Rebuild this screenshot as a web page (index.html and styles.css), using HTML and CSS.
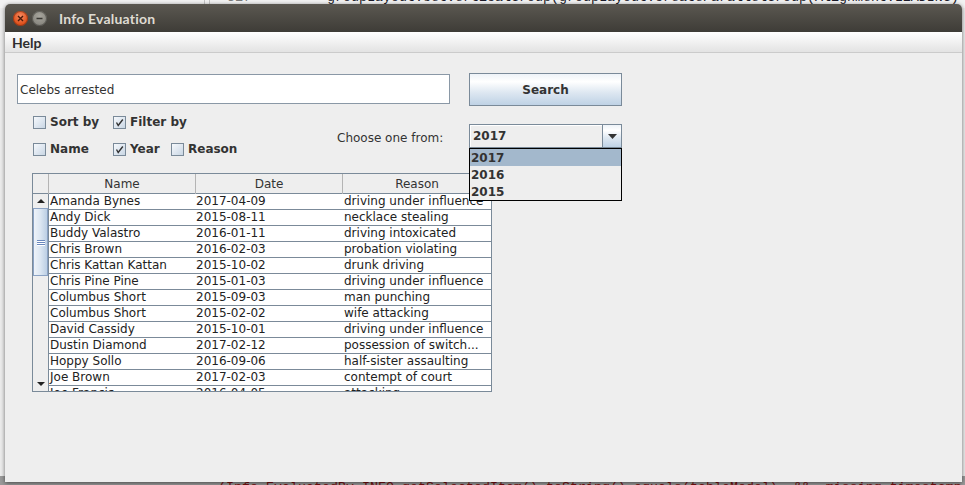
FILE: index.html
```html
<!DOCTYPE html>
<html>
<head>
<meta charset="utf-8">
<title>Info Evaluation</title>
<link rel="stylesheet" href="styles.css">
</head>
<body>
<div class="desk-top">
  <span class="gutter g1"></span><span class="gutter g2"></span>
  <span class="lineno">317</span>
  <span class="code">groupLayout.setVerticalGroup(groupLayout.createParallelGroup(Alignment.LEADING)</span>
</div>
<div class="desk-bottom">
  <span class="redcode">(Info EvaluatedBy INFO.getSelectedItem().toString().equals(tableModel)  &amp;&amp;  missing_timestamp  YES</span>
</div>

<div class="window">
  <div class="titlebar">
    <span class="wbtn close"><svg width="7" height="7" viewBox="0 0 7 7"><path d="M1 1 L6 6 M6 1 L1 6" stroke="#4a1a0a" stroke-width="1.4"/></svg></span>
    <span class="wbtn mini"><svg width="7" height="7" viewBox="0 0 7 7"><path d="M0.5 3.5 L6.5 3.5" stroke="#3a3935" stroke-width="1.4"/></svg></span>
    <span class="title">Info Evaluation</span>
  </div>
  <div class="menubar"><span class="menu">Help</span></div>

  <div class="panel">
    <div class="row1">
      <div class="field">Celebs arrested</div>
      <div class="button">Search</div>
    </div>
    <div class="row2">
      <div class="checks">
        <div class="chk"><span class="cb"></span>Sort by</div>
        <div class="chk span2"><span class="cb"><svg width="11" height="11" viewBox="0 0 11 11"><path d="M2.5 5.5 L4.2 8.5 L8.8 2.5" fill="none" stroke="#333" stroke-width="1.4"/></svg></span>Filter by</div>
        <div class="chk"><span class="cb"></span>Name</div>
        <div class="chk"><span class="cb"><svg width="11" height="11" viewBox="0 0 11 11"><path d="M2.5 5.5 L4.2 8.5 L8.8 2.5" fill="none" stroke="#333" stroke-width="1.4"/></svg></span>Year</div>
        <div class="chk"><span class="cb"></span>Reason</div>
      </div>
      <div class="choose">Choose one from:</div>
      <div class="combo">
        <div class="combo-text">2017</div>
        <div class="combo-arrow"><svg width="9" height="5" viewBox="0 0 9 5"><path d="M0 0 L9 0 L4.5 5 Z" fill="#333"/></svg></div>
      </div>
    </div>

    <div class="pane">
      <div class="thead">
        <div class="corner"></div>
        <div class="th">Name</div>
        <div class="th">Date</div>
        <div class="th last">Reason</div>
      </div>
      <div class="tbody-wrap">
        <div class="vscroll">
          <div class="sarrow up"><svg width="8" height="4" viewBox="0 0 8 4"><path d="M0 4 L8 4 L4 0 Z" fill="#222"/></svg></div>
          <div class="thumb"><span class="grip"></span><span class="grip"></span><span class="grip"></span></div>
          <div class="track"></div>
          <div class="sarrow down"><svg width="8" height="4" viewBox="0 0 8 4"><path d="M0 0 L8 0 L4 4 Z" fill="#222"/></svg></div>
        </div>
        <div class="tbody">
          <div class="tr"><span>Amanda Bynes</span><span>2017-04-09</span><span>driving under influence</span></div>
          <div class="tr"><span>Andy Dick</span><span>2015-08-11</span><span>necklace stealing</span></div>
          <div class="tr"><span>Buddy Valastro</span><span>2016-01-11</span><span>driving intoxicated</span></div>
          <div class="tr"><span>Chris Brown</span><span>2016-02-03</span><span>probation violating</span></div>
          <div class="tr"><span>Chris Kattan Kattan</span><span>2015-10-02</span><span>drunk driving</span></div>
          <div class="tr"><span>Chris Pine Pine</span><span>2015-01-03</span><span>driving under influence</span></div>
          <div class="tr"><span>Columbus Short</span><span>2015-09-03</span><span>man punching</span></div>
          <div class="tr"><span>Columbus Short</span><span>2015-02-02</span><span>wife attacking</span></div>
          <div class="tr"><span>David Cassidy</span><span>2015-10-01</span><span>driving under influence</span></div>
          <div class="tr"><span>Dustin Diamond</span><span>2017-02-12</span><span>possession of switch...</span></div>
          <div class="tr"><span>Hoppy Sollo</span><span>2016-09-06</span><span>half-sister assaulting</span></div>
          <div class="tr"><span>Joe Brown</span><span>2017-02-03</span><span>contempt of court</span></div>
          <div class="tr"><span>Joe Francis</span><span>2016-04-05</span><span>attacking</span></div>
        </div>
      </div>
    </div>

    <div class="popup">
      <div class="item sel">2017</div>
      <div class="item">2016</div>
      <div class="item">2015</div>
    </div>
  </div>
</div>
</body>
</html>
```

FILE: styles.css
```css
* { box-sizing: border-box; }
html, body { margin: 0; padding: 0; }
body {
  width: 965px;
  height: 485px;
  overflow: hidden;
  position: relative;
  background: #ececec;
  font-family: "DejaVu Sans", sans-serif;
  font-size: 12px;
  color: #333;
}

/* desktop behind the window */
.desk-top {
  position: absolute; left: 0; top: 0;
  width: 965px; height: 8px;
  overflow: hidden;
  background: #f2f2f2;
}
.gutter { position: absolute; top: 0; width: 1px; height: 8px; background: #c4c4c4; }
.g1 { left: 204px; }
.g2 { left: 209px; }
.lineno {
  position: absolute; left: 227px; top: -9px;
  font-family: "Liberation Mono", monospace; font-size: 13.33px; line-height: 14px;
  color: #7a7a7a; white-space: pre;
}
.code {
  position: absolute; left: 327px; top: -9px;
  font-family: "Liberation Mono", monospace; font-size: 13.33px; line-height: 14px;
  color: #1c1c2a; white-space: pre;
}
.desk-bottom {
  position: absolute; left: 0; top: 476px;
  width: 965px; height: 9px;
  background: #9a9a9a;
  overflow: hidden;
}
.redcode {
  position: absolute; left: 218px; top: 5px;
  font-family: "Liberation Mono", monospace; font-size: 13.33px; line-height: 14px;
  color: #7a1010; white-space: pre;
}

/* window */
.window {
  position: absolute; left: 5px; top: 4px;
  width: 957px; height: 478px;
  background: #eeeeee;
  border-radius: 5px 5px 0 0;
  box-shadow: 0 1px 4px rgba(0,0,0,0.55);
  overflow: hidden;
  display: flex; flex-direction: column;
}
.titlebar {
  flex: none;
  height: 28px;
  display: flex; align-items: center;
  padding-left: 8px;
  background: linear-gradient(#5b5851, #3e3c37);
}
.wbtn {
  width: 15px; height: 15px; border-radius: 50%;
  display: flex; align-items: center; justify-content: center;
}
.close {
  background: radial-gradient(circle at 50% 35%, #f78c64 0%, #e0541f 60%, #c2431a 100%);
  box-shadow: inset 0 0 0 1px rgba(90,30,10,0.45);
}
.mini {
  margin-left: 4px;
  background: radial-gradient(circle at 50% 35%, #a8a69e 0%, #8a8881 65%, #75736d 100%);
  box-shadow: inset 0 0 0 1px rgba(40,40,36,0.45);
}
.title {
  margin-left: 12px;
  font-family: Lato, "DejaVu Sans", sans-serif;
  font-weight: 700; font-size: 14px;
  color: #dfdbd2;
  letter-spacing: 0.2px;
}
.menubar {
  flex: none;
  height: 21px;
  display: flex; align-items: center;
  padding-left: 7px;
  background: linear-gradient(#ffffff, #e3e3e3);
  border-bottom: 1px solid #cbcbcb;
}
.menu {
  font-family: Lato, "DejaVu Sans", sans-serif;
  font-weight: 700; font-size: 14px;
  color: #2e2e2e;
}

/* content panel */
.panel {
  flex: 1;
  position: relative;
  background: #eeeeee;
}
.row1 {
  display: flex; align-items: flex-start;
  margin: 20px 0 0 12px;
}
.field {
  width: 433px; height: 30px;
  margin-top: 1px;
  border: 1px solid #8a98a6;
  background: #fff;
  padding: 1px 0 0 2px;
  line-height: 28px;
  color: #333;
}
.button {
  width: 153px; height: 33px;
  margin-left: 19px;
  border: 1px solid #7a8a99;
  background: linear-gradient(#eef3f8 0%, #ffffff 25%, #dde7f1 60%, #bfd2e5 100%);
  font-weight: 700;
  display: flex; align-items: center; justify-content: center;
  color: #333;
}

.row2 {
  display: flex; align-items: flex-start;
  margin: 6px 0 0 28px;
}
.checks {
  width: 304px;
  display: grid;
  grid-template-columns: 80px 58px 1fr;
  grid-auto-rows: 20px;
  row-gap: 7px;
}
.chk {
  display: flex; align-items: center;
  font-weight: 700;
  white-space: nowrap;
  color: #333;
}
.span2 { grid-column: span 2; }
.cb {
  width: 13px; height: 13px;
  margin-right: 4px;
  border: 1px solid #7a8a99;
  background: linear-gradient(135deg, #f6f9fc 0%, #dbe4ee 60%, #c9d6e3 100%);
  display: flex; align-items: center; justify-content: center;
}
.choose {
  width: 132px;
  margin-top: 18px;
  line-height: 16px;
  color: #333;
}
.combo {
  width: 153px; height: 24px;
  margin-top: 12px;
  border: 1px solid #7a8a99;
  display: flex;
}
.combo-text {
  flex: 1;
  background: #eeeeee;
  box-shadow: inset 1px 1px 0 #ffffff;
  padding-left: 3px;
  font-weight: 700;
  line-height: 22px;
  color: #333;
}
.combo-arrow {
  width: 19px;
  border-left: 1px solid #7a8a99;
  background: linear-gradient(#eef3f8 0%, #ffffff 25%, #dde7f1 60%, #bfd2e5 100%);
  display: flex; align-items: center; justify-content: center;
}

/* table */
.pane {
  width: 460px; height: 219px;
  margin: 14px 0 0 27px;
  border: 1px solid #7a8a99;
  display: flex; flex-direction: column;
  overflow: hidden;
  background: #eeeeee;
}
.thead {
  flex: none;
  height: 20px;
  display: grid;
  grid-template-columns: 16px 147px 147px 1fr;
  border-bottom: 1px solid #7a8a99;
  background: #eeeeee;
}
.corner { border-right: 1px solid #b4b4b4; }
.th {
  border-right: 1px solid #b4b4b4;
  text-align: center;
  line-height: 19px;
  padding-top: 1px;
  color: #333;
}
.th.last { border-right: none; }
.tbody-wrap {
  flex: 1;
  display: flex;
  overflow: hidden;
}
.vscroll {
  width: 15px; flex: none;
  display: flex; flex-direction: column;
  background: #eeeeee;
}
.sarrow {
  flex: none;
  display: flex; align-items: center; justify-content: center;
}
.sarrow.up { height: 14px; }
.sarrow.down { height: 15px; }
.thumb {
  flex: none;
  height: 68px;
  border: 1px solid #8aa2c4;
  background: linear-gradient(90deg, #eef3f9 0%, #dbe6f2 50%, #bccfe4 100%);
  display: flex; flex-direction: column; align-items: center; justify-content: center;
  gap: 1px;
}
.grip {
  width: 8px; height: 1px;
  background: #6a88bd;
  box-shadow: 0 1px 0 #ffffff;
}
.track { flex: 1; }
.tbody {
  flex: 1;
  border-left: 1px solid #7a8a99;
  background: #ffffff;
  overflow: hidden;
}
.tr {
  height: 16px;
  display: grid;
  grid-template-columns: 146px 148px 148px;
  border-bottom: 1px solid #7b8a99;
  line-height: 15px;
  color: #222;
}
.tr span {
  padding-left: 1px;
  white-space: nowrap;
  overflow: hidden;
}

/* combo popup */
.popup {
  position: absolute;
  left: 464px; top: 95px;
  width: 153px; height: 53px;
  border: 1px solid #000;
  background: #eeeeee;
}
.item {
  height: 17px;
  line-height: 16px;
  padding: 1px 0 0 1px;
  font-weight: 700;
  color: #333;
}
.item.sel { background: #a3b8cc; }
```
